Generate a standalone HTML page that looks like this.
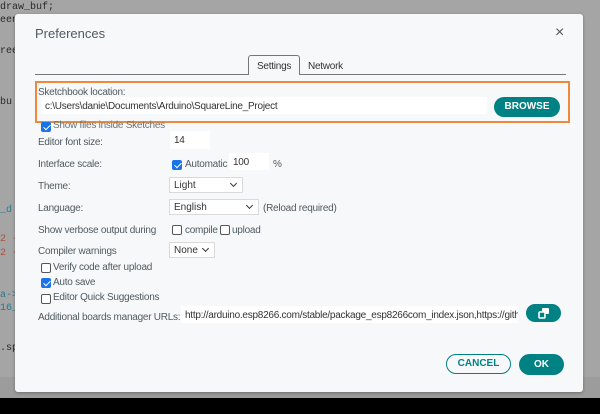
<!DOCTYPE html>
<html><head><meta charset="utf-8"><style>
*{box-sizing:border-box;margin:0;padding:0}
body{width:600px;height:414px;overflow:hidden;background:#a5a5a5;font-family:"Liberation Sans",Arial,sans-serif;position:relative;font-size:10px;color:#4e5b61}
.abs{position:absolute}
.code{font-family:"Liberation Mono",monospace;font-size:10px;color:#2a2a2a;left:0}
#band{left:0;top:377px;width:600px;height:22px;background:#9c9c9c}
#black{left:0;top:398px;width:600px;height:16px;background:#000}
#dlg{left:15px;top:14px;width:568px;height:378px;background:#f7f8fa;border-radius:3px;box-shadow:0 1px 3px rgba(0,0,0,.3)}
.t{position:absolute;white-space:nowrap;color:#4e5b61;font-size:10px;letter-spacing:-0.25px}
.in{position:absolute;background:#fff;height:17px;font-size:10px;color:#333;padding:4px 4px;white-space:nowrap;overflow:hidden;letter-spacing:-0.25px}
.sel{position:absolute;background:#fff;border:1px solid #dadada;height:16px;font-size:10px;color:#333;padding:2px 4px}
.sel:after{content:"";position:absolute;right:6px;top:3px;width:4px;height:4px;border-right:1.5px solid #333;border-bottom:1.5px solid #333;transform:rotate(45deg)}
.cb{position:absolute;width:10px;height:10px;border:1px solid #555;border-radius:2px;background:#fff}
.cb.on{background:#1a73e8;border-color:#1a73e8}
.cb.on:after{content:"";position:absolute;left:2.5px;top:0px;width:3px;height:6px;border-right:1.5px solid #fff;border-bottom:1.5px solid #fff;transform:rotate(45deg)}
.btn{position:absolute;background:#008184;color:#fff;font-weight:bold;border-radius:11px;text-align:center;font-size:10px}
</style></head><body>
<div class="abs code" style="top:2px">draw_buf;</div>
<div class="abs code" style="top:15px">eenl</div>
<div class="abs code" style="top:46px">reen</div>
<div class="abs code" style="top:97px">bu</div>
<div class="abs code" style="top:205px;color:#2a7a8a">_d</div>
<div class="abs code" style="top:234px;color:#b0503a">2 -</div>
<div class="abs code" style="top:248px;color:#b0503a">2 -</div>
<div class="abs code" style="top:290px;color:#2a7a8a">a-></div>
<div class="abs code" style="top:303px;color:#2a7a8a">16_</div>
<div class="abs code" style="top:343px">.sp</div>
<div id="band" class="abs"></div>
<div id="black" class="abs"></div>
<div id="dlg" class="abs">
 <div class="t" style="left:20px;top:12px;font-size:13px;letter-spacing:0">Preferences</div>
 <div class="t" style="left:540px;top:10px;font-size:16px;color:#555">×</div>
 <div class="abs" style="left:20px;top:60px;width:531px;height:1px;background:#777"></div>
 <div class="abs" style="left:233px;top:41px;width:52px;height:20px;border:1px solid #777;border-bottom:none;border-radius:3px 3px 0 0;background:#f7f8fa"></div>
 <div class="t" style="left:242px;top:47px;color:#333">Settings</div>
 <div class="t" style="left:293px;top:47px;color:#333">Network</div>
 <div class="abs" style="left:20px;top:67px;width:535px;height:42px;border:2px solid #ef8a3c"></div>
 <div class="t" style="left:23px;top:73px">Sketchbook location:</div>
 <div class="in" style="left:26px;top:83px;width:446px">c:\Users\danie\Documents\Arduino\SquareLine_Project</div>
 <div class="btn" style="left:479px;top:83px;width:66px;height:20px;line-height:20px">BROWSE</div>
 <div class="cb on" style="left:26px;top:108px"></div>
 <div class="t" style="left:38px;top:106px;color:#6a7377">Show files inside Sketches</div>
 <div class="t" style="left:23px;top:123px">Editor font size:</div>
 <div class="in" style="left:155px;top:117px;width:40px;height:18px">14</div>
 <div class="t" style="left:23px;top:145px">Interface scale:</div>
 <div class="cb on" style="left:157px;top:146px"></div>
 <div class="t" style="left:170px;top:145px">Automatic</div>
 <div class="in" style="left:214px;top:139px;width:40px">100</div>
 <div class="t" style="left:258px;top:145px">%</div>
 <div class="t" style="left:23px;top:167px">Theme:</div>
 <div class="sel" style="left:154px;top:163px;width:74px">Light</div>
 <div class="t" style="left:23px;top:189px">Language:</div>
 <div class="sel" style="left:154px;top:185px;width:90px">English</div>
 <div class="t" style="left:248px;top:189px">(Reload required)</div>
 <div class="t" style="left:23px;top:211px">Show verbose output during</div>
 <div class="cb" style="left:157px;top:211px"></div>
 <div class="t" style="left:170px;top:211px">compile</div>
 <div class="cb" style="left:205px;top:211px"></div>
 <div class="t" style="left:217px;top:211px">upload</div>
 <div class="t" style="left:23px;top:232px">Compiler warnings</div>
 <div class="sel" style="left:154px;top:228px;width:46px">None</div>
 <div class="cb" style="left:26px;top:249px"></div>
 <div class="t" style="left:38px;top:248px">Verify code after upload</div>
 <div class="cb on" style="left:26px;top:264px"></div>
 <div class="t" style="left:38px;top:263px">Auto save</div>
 <div class="cb" style="left:26px;top:280px"></div>
 <div class="t" style="left:38px;top:278px">Editor Quick Suggestions</div>
 <div class="t" style="left:23px;top:298px">Additional boards manager URLs:</div>
 <div class="in" style="left:166px;top:292px;width:337px">http://arduino.esp8266.com/stable/package_esp8266com_index.json,https://github</div>
 <div class="btn" style="left:511px;top:290px;width:35px;height:18px">
  <svg width="14" height="12" viewBox="0 0 14 12" style="margin-top:3px"><rect x="5" y="1" width="7" height="6" rx="1" fill="#fff"/><rect x="2" y="5" width="6" height="6" rx="1" fill="#008184" stroke="#fff" stroke-width="1.6"/></svg>
 </div>
 <div class="abs" style="left:431px;top:340px;width:65px;height:20px;border:1.5px solid #008184;border-radius:10px;color:#008184;font-weight:bold;text-align:center;line-height:17px;font-size:10px">CANCEL</div>
 <div class="btn" style="left:504px;top:340px;width:45px;height:21px;line-height:21px">OK</div>
</div>
</body></html>
